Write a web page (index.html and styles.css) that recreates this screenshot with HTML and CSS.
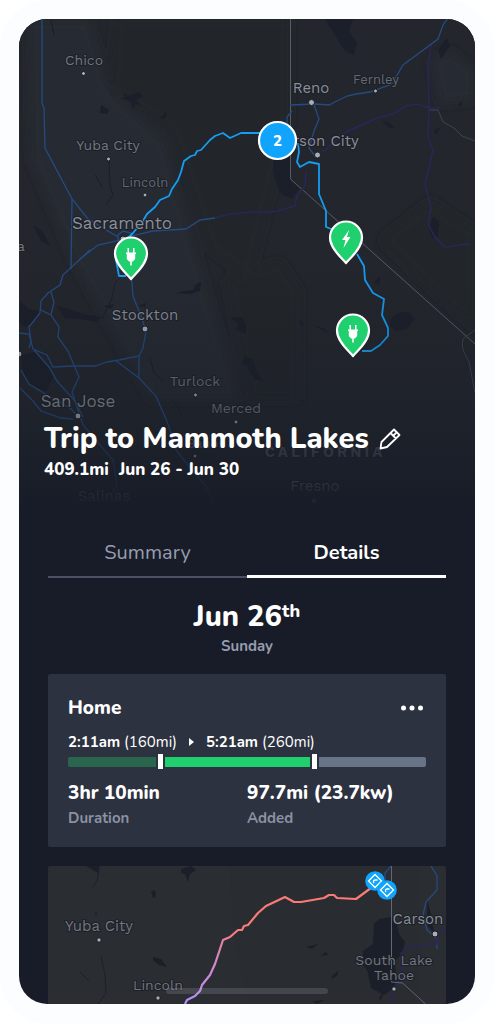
FILE: index.html
```html
<!DOCTYPE html>
<html lang="en">
<head>
<meta charset="utf-8">
<meta name="viewport" content="width=device-width, initial-scale=1">
<title>Trip to Mammoth Lakes</title>
<link rel="stylesheet" href="styles.css">
</head>
<body>
<div class="frame">
<main class="phone">
  <header class="hero">
    <svg class="map" viewBox="19 19 456 490" role="img" aria-label="Map of the trip route">
      <defs>
        <linearGradient id="fade" x1="0" y1="0" x2="0" y2="1">
          <stop offset="0.5" stop-color="#171c28" stop-opacity="0"/>
          <stop offset="0.8" stop-color="#171c28" stop-opacity="0.35"/>
          <stop offset="0.93" stop-color="#171c28" stop-opacity="0.75"/>
          <stop offset="1" stop-color="#171c28"/>
        </linearGradient>
        <filter id="soft"><feGaussianBlur stdDeviation="5"/></filter>
        <path id="pin" d="M0 21C-3 17-16 7-16-4.500A16 16 0 0 1 16-4.500C16 7 3 17 0 21Z" fill="#20cf6e" stroke="#fff" stroke-width="2.200" stroke-linejoin="round"/>
        <path id="plug" d="M-3.500-10h1.500v4.500h4v-4.500h1.500v4.500h1.500v1.500h-.8v5l-2.200 2.500h-1.200v4h-1.600v-4h-1.200l-2.200-2.500v-5h-.8v-1.500h1.500z" fill="#fff"/>
      </defs>
      <rect x="19" y="19" width="456" height="490" fill="#23262c"/>
      <g filter="url(#soft)">
        <path d="M115 19H290V120L250 280 210 250 190 190 170 130 110 90Z" fill="#212529"/>
        <path d="M28 19H90L110 90 165 140 190 230 240 400H150L72 260 30 160Z" fill="#272a30"/>
        <path d="M430 60 450 50 475 70V100L440 105Z" fill="#282c33"/>
        <path d="M225 280 280 260 300 290V400H250Z" fill="#222529"/>
        <path d="M380 240 430 200 475 230V330L410 270Z" fill="#222529"/>
      </g>
      <g fill="#1b1f2a">
        <path d="M325 19h28l-4 12 8 12-3 12-9-4-7-11z"/>
        <path d="M273 160l18-5v27l8 6-7 11-11-5-7-17z"/>
        <path d="M438 50l9-12 3 8-9 13zM433 217l6 4-1 15-6 3-3-10z"/>
        <path d="M122 92l6 4 11-4 4 5-7 3 5 5-6-1-2 6-3-9-9-3 5-1zM101 105l8 5-2 4-7-1zM161 116l6-5-1 7-6 1z"/>
        <path d="M33 225l10 7 7 13-9-4zM20 301l9 8 10 2-2 8-12 8-6-5z"/>
        <path d="M21 355l14-3 13 12 6 12-8 15-15-5-8-12z"/>
        <path d="M57 306l12 3 14 5 18 3-4 5-17-3-16-1zM103 306l11-2-3 5zM137 306l9-3-1 4z"/>
        <path d="M176 293l8-2 9-1 3-6 5-2-1 9-10 3zM230 318l8 5-2 7 10 4v-9l-4-8zM313 325l13 4 2 4zM300 319l4 5-4 3z"/>
        <path d="M390 323c2-8 11-13 20-10l4 7-7 9-11 2-6-5zM374 282l6-6-1 9zM244 356l9 3 4 13 7 10-10-3-7-13-5-2z"/>
        <path d="M382 120l8 3 6 6-8-2zM434 130l7-3-5 8zM458 104l5-3-3 7z"/>
      </g>
      <g fill="none" stroke="#1b1f29" stroke-width="1">
        <path d="M109 160l1 25 3 10-7 10M95 175l7 12M102 319l10-21 3-15 8-8M51 20l3 15M173 400l9 15M150 358l4 15 10 8"/>
      </g>
      <g fill="none" stroke="#555c66" stroke-width="1">
        <path d="M290.500 19V179L475 344"/>
        <path d="M428 110h10l5 12 11 6 8 8 13 5M475 330l-11 8c-5 8 2 18 5 24l6 31" stroke="#3e454f"/>
      </g>
      <g fill="none" stroke="#292658" stroke-width="1.500">
        <path d="M215 218l15-4 20-2 20 0 8-1 9-3 8-2 2-10 8-10 1-15M323 152l23-20 31-14 16-4 13-8 11-2 13 4h11M431 44l-3 25 1 40-1 28 5 13-5 22-3 12 6 25-3 15 7 13 10 10 25-3"/>
      </g>
      <g fill="none" stroke="#254b82" stroke-width="1.300">
        <path d="M42 19v84l2 5 1 40 27 51 16 20 30 18"/>
        <path d="M72 199l-1 70M80 259l18-14 23-5 10-4 22-5 33-2 14-9 15-2"/>
        <path d="M118 235l5-4 8 2-2 6-11 0z"/>
        <path d="M90 250L63 275l-3 10-12 8-7 8-1 12-11 14 2 14-2 7"/>
        <path d="M51 292l3 10-3 13-10-5M51 315l8 12-1 10 10 14 11 26-7 15 6 18 5 15 30 35 4 25-10 15"/>
        <path d="M19 333l10 1 4 15 14 6 6 12 20-1h22l12-4 12-2 20-4 4-8 3-17-5-15-8-20-1-14-8-18"/>
        <path d="M115 360l24 18 17 18 12 28 8 26 14 18 16 18 8 18M139 356v23"/>
        <path d="M34 350l15 17 8 14 18 20 8 16M21 370l8 14 18 11 23 13 8 8M20 388l13 13 8 10 20 7 12 1"/>
        <path d="M290 105l25-1 14 1 8-4 10-5 9-2 14-2 22-8 11-19 23-17 12-9 5-14 5-7M314 105l5 14-5 12-5 17 6 8M287 125v-8l5-6"/>
      </g>
      <path d="M115 250l1 10 3 16h7M128 238l5-5 10-12 4-7 8-7 5-7 9-4 3-7 6-9 3-8 3-11 7-5 4-1 2-4 4-1 9-10 5-4 8-3 7 5 11-5h24M298 143l1 9-2 10 3 5 9-5 10 2v30l7 17v16l8 3M357 254l7 12 1 14 8 13 11 6-2 16 6 13v8l-8 9-9 6h-9" fill="none" stroke="#159df5" stroke-width="1.800" stroke-linejoin="round"/>
      <g class="places">
        <text x="84" y="65">Chico</text><text x="108" y="150">Yuba City</text>
        <text x="145" y="187" class="minor">Lincoln</text><text x="122" y="229" class="major">Sacramento</text>
        <text x="311" y="93" class="bright">Reno</text><text x="376" y="84" class="minor">Fernley</text>
        <text x="326" y="146" class="bright">rson City</text><text x="145" y="320" class="bright">Stockton</text>
        <text x="78" y="407" class="major">San Jose</text><text x="195" y="386">Turlock</text>
        <text x="236" y="413">Merced</text><text x="206" y="448" class="minor">Banos</text>
        <text x="104" y="501" class="bright">Salinas</text><text x="315" y="491" class="bright">Fresno</text>
        <text x="325" y="457" class="state">CALIFORNIA</text><text x="21" y="251">a</text>
      </g>
      <g class="dots"><circle cx="83.500" cy="73.500" r="2"/><circle cx="108.500" cy="159" r="2"/><circle cx="145" cy="195" r="2"/><circle cx="123" cy="239" r="3"/><circle cx="311.500" cy="102.500" r="3"/><circle cx="375.500" cy="91" r="2"/><circle cx="317.500" cy="155" r="3"/><circle cx="145" cy="329" r="3"/><circle cx="78" cy="416" r="3"/><circle cx="195.500" cy="395" r="2"/><circle cx="236" cy="422" r="2"/><circle cx="195" cy="456" r="2"/><circle cx="314" cy="501" r="2.600"/><circle cx="19" cy="354" r="3"/></g>
      <rect x="19" y="19" width="456" height="490" fill="url(#fade)"/>
      <g transform="translate(131 258)"><use href="#pin"/><use href="#plug"/></g>
      <g transform="translate(346 242)"><use href="#pin"/><path d="M3-12-4-2h3.500L-2.500 6 4.500-5H1z" fill="#fff"/></g>
      <g transform="translate(353 335)"><use href="#pin"/><use href="#plug"/></g>
      <circle cx="277.500" cy="140.500" r="18.500" fill="#10a4fc" stroke="#fff" stroke-width="2.200"/>
      <text x="277.500" y="146" class="count">2</text>
    </svg>
    <div class="trip">
      <div class="trip-line">
        <h1 class="trip-title">Trip to Mammoth Lakes</h1>
        <button class="icon-button" type="button" aria-label="Edit trip name">
          <svg class="edit" viewBox="0 0 22 22" fill="none" stroke="#fff" stroke-width="1.800" stroke-linejoin="round"><path d="M1.500 20.500 2.500 14 15 1.500 20.500 7 8 19ZM11.500 5 17 10.500M14 8 17.500 4.500"/></svg>
        </button>
      </div>
      <p class="trip-meta"><span>409.1mi</span><span>Jun 26 - Jun 30</span></p>
    </div>
  </header>
  <div class="content">
    <nav class="tabs" role="tablist">
      <button class="tab" type="button" role="tab" aria-selected="false">Summary</button>
      <button class="tab tab-active" type="button" role="tab" aria-selected="true">Details</button>
    </nav>
    <section class="date">
      <h2 class="date-title">Jun 26<sup>th</sup></h2>
      <p class="weekday">Sunday</p>
    </section>
    <article class="card">
      <div class="card-head">
        <h3 class="card-title">Home</h3>
        <button class="icon-button" type="button" aria-label="More options"><svg class="more" viewBox="0 0 24 8" fill="#fff"><circle cx="3.500" cy="4" r="2.500"/><circle cx="12" cy="4" r="2.500"/><circle cx="20.500" cy="4" r="2.500"/></svg></button>
      </div>
      <div class="times">
        <p class="time"><strong>2:11am</strong><span>(160mi)</span></p>
        <svg class="arrow" viewBox="0 0 5 8" fill="#fff" aria-hidden="true"><path d="M0 0 5 4 0 8Z"/></svg>
        <p class="time"><strong>5:21am</strong><span>(260mi)</span></p>
      </div>
      <div class="range" role="img" aria-label="Charged from 160mi to 260mi">
        <span class="range-before"></span><span class="range-mark"></span><span class="range-added"></span><span class="range-mark"></span><span class="range-rest"></span>
      </div>
      <dl class="stats">
        <div class="stat"><dt>Duration</dt><dd>3hr 10min</dd></div>
        <div class="stat"><dt>Added</dt><dd>97.7mi (23.7kw)</dd></div>
      </dl>
    </article>
    <svg class="leg-map" viewBox="48 866 398 138" role="img" aria-label="Map of the next leg">
      <defs>
        <linearGradient id="leg" gradientUnits="userSpaceOnUse" x1="190" y1="1000" x2="235" y2="925"><stop offset="0" stop-color="#b78cf5"/><stop offset="0.5" stop-color="#d188ca"/><stop offset="1" stop-color="#fa7a77"/></linearGradient>
        <g id="stop"><circle r="9.800" fill="#10a4fc"/><path d="M0-6.500 6.500 0 0 6.500-6.500 0ZM2.500-1H0Q-2.500-.5-1 2" fill="none" stroke="#fff" stroke-width="1.300"/></g>
      </defs>
      <rect x="48" y="866" width="398" height="138" fill="#2a2d32"/>
      <path d="M230 866h190v138H250l-15-60Z" fill="#292c31"/>
      <g fill="#1b1f29">
        <path d="M363 951l10-7 1-20 5-5 13-2 5 8 2 9 6 8-3 12-8 8 3 14-3 12-10 7-13-7-4-18-5-6z"/>
        <path d="M181 869l10-3 5 4-6 4-2 8-3-8-4-1zM86 866h14l-2 7zM151 892l4-2 1 6-3 2zM153 957l8 2 6 8-8-2-6-5z"/>
        <path d="M427 900l4 13 3 20-7-8zM306 947l12-3-6 5zM316 959l10-7 2 3-8 1zM332 976l7-6-2 6-6 3zM312 1001l13-1-8 4zM379 998l5-7-3 10z"/>
      </g>
      <path d="M101 956l4 19 1 18-8 11M80 972l9 9M99 870l-2 11-4 6M96 912v5" fill="none" stroke="#1d212a"/>
      <g fill="none" stroke="#254b82" stroke-width="1.300"><path d="M391 866l-6 7v12M431 866l6 10v14l-11 12-3 13 4 15 10 9v10"/></g>
      <path d="M446 929l-9 4v11h-7l-12 1-9 2-8 6v24l-9 15-1 12" fill="none" stroke="#292658" stroke-width="1.500"/>
      <path d="M391.500 866v116l11 1 23 21" fill="none" stroke="#626772"/>
      <path d="M185 1004l2-4 8-4 5-5 2-6 8-10 5-11 5-15 3-9 7-3 8-7h4l2-4 4-1 10-12 8-7 19-9 9 5h7l23-4 5-3h5l3 3 19 1 19-14" fill="none" stroke="url(#leg)" stroke-width="2.200" stroke-linejoin="round"/>
      <g class="places"><text x="99" y="931" class="near">Yuba City</text><text x="158" y="990">Lincoln</text><text x="418" y="924" class="bright">Carson</text><text x="394" y="965">South Lake</text><text x="394" y="980">Tahoe</text></g>
      <g class="dots"><circle cx="99" cy="940" r="2.200"/><circle cx="158" cy="998" r="2.200"/><circle cx="435" cy="934" r="3"/><circle cx="394" cy="989" r="2.200"/></g>
      <use href="#stop" x="375" y="881"/><use href="#stop" x="387" y="890"/>
    </svg>
  </div>
  <div class="home-bar"></div>
</main>
</div>
</body>
</html>
```

FILE: styles.css
```css
* { box-sizing: border-box; }
body { margin: 0; background: #fff; color: #fff; font-family: Nunito, "Open Sans", "Noto Sans", sans-serif; }
h1, h2, h3, p, dl, dd { margin: 0; }
button { margin: 0; padding: 0; border: 0; background: none; color: inherit; font: inherit; cursor: pointer; }
svg { display: block; }

.frame { padding: 19px 19px 20px; border-radius: 48px; background: #fcfdff; }
.phone { position: relative; overflow: hidden; border-radius: 28px; background: #171c28; }

.hero { position: relative; }
.map, .leg-map { width: 100%; }
.trip { position: absolute; left: 25px; right: 25px; bottom: 27px; }
.trip-line { display: flex; align-items: center; gap: 10px; }
.trip-title { font-size: 29px; line-height: 38px; font-weight: 800; white-space: nowrap; }
.trip-meta { display: flex; gap: 10px; font-size: 17px; line-height: 24px; font-weight: 800; }
.icon-button { display: flex; }
.edit { width: 22px; height: 22px; }

.places { fill: #717680; font-family: "Work Sans", Roboto, sans-serif; font-size: 14px; text-anchor: middle; paint-order: stroke; stroke: #1d2027; stroke-width: 2px; }
.places .minor { font-size: 13px; fill: #646a75; }
.places .near { font-size: 15px; }
.places .bright { font-size: 15px; fill: #8b8f9a; }
.places .major { font-size: 17px; fill: #8b8f9a; }
.places .state { font-size: 15px; font-weight: 700; letter-spacing: 3px; fill: #505865; }
.dots { fill: #a9adb5; stroke: #181b21; stroke-width: 1px; }
.count { fill: #fff; font-size: 15px; font-weight: 800; text-anchor: middle; }

.content { padding: 25px 29px 0; }
.tabs { display: grid; grid-template-columns: 1fr 1fr; border-bottom: 2px solid #4b5163; }
.tab { height: 42px; padding-bottom: 4px; font-size: 20px; line-height: 24px; color: #979dae; }
.tab-active { position: relative; color: #fff; font-weight: 700; }
.tab-active::after { content: ""; position: absolute; left: 0; right: 0; bottom: -2px; height: 3px; background: #fff; }

.date { padding: 21px 0 17px; text-align: center; }
.date-title { font-size: 29px; line-height: 36px; font-weight: 800; }
.date-title sup { font-size: 18px; line-height: 0; vertical-align: 9px; }
.weekday { font-size: 15px; line-height: 22px; font-weight: 700; color: #979dae; }

.card { margin-bottom: 19px; padding: 21px 20px 18px; border-radius: 2px; background: #2c323f; }
.card-head { display: flex; align-items: center; justify-content: space-between; }
.card-title { font-size: 19px; line-height: 26px; font-weight: 800; }
.more { width: 24px; height: 8px; margin-right: 2px; }
.times { display: flex; align-items: center; gap: 12px; margin-top: 11px; font-size: 15px; line-height: 20px; }
.time { display: flex; gap: 4px; }
.time strong { font-weight: 700; }
.arrow { width: 5px; height: 8px; }
.range { display: flex; align-items: center; gap: 2px; margin: 2px 0 10px; }
.range-before, .range-added, .range-rest { height: 10px; }
.range-before { flex: 88; border-radius: 2px 0 0 2px; background: #29664d; }
.range-added { flex: 145; background: #20cf6e; }
.range-rest { flex: 107; border-radius: 0 2px 2px 0; background: #677386; }
.range-mark { width: 5px; height: 15px; background: #fff; }
.stats { display: grid; grid-template-columns: 1fr 1fr; }
.stat { display: flex; flex-direction: column-reverse; }
.stat dd { font-size: 19px; line-height: 28px; font-weight: 800; white-space: nowrap; }
.stat dt { font-size: 15px; line-height: 22px; font-weight: 700; color: #8b91a3; }

.leg-map { border-radius: 2px 2px 0 0; }
.home-bar { position: absolute; left: 50%; bottom: 10px; width: 162px; height: 6px; margin-left: -81px; border-radius: 3px; background: #c8c8dc2b; }
```
